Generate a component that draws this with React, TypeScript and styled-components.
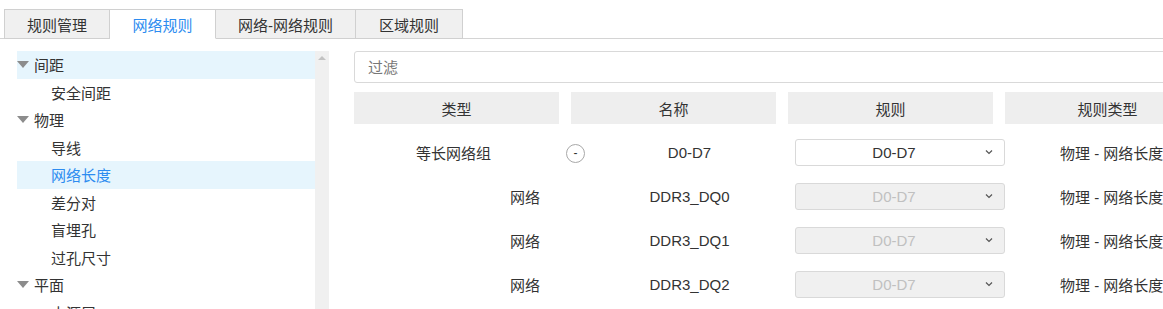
import React from "react"
import styled, { createGlobalStyle } from "styled-components"

const GlobalStyle = createGlobalStyle`
  html, body {
    margin: 0;
    padding: 0;
    background: #fff;
    overflow: hidden;
  }
  body {
    font-family: "Liberation Sans", "Noto Sans CJK SC", sans-serif;
    font-size: 15px;
    color: #333;
  }
`

const Page = styled.div`
  width: 1163px;
  height: 309px;
  overflow: hidden;
`

const TabBar = styled.div`
  display: flex;
  padding: 9px 0 0 4px;
  border-bottom: 1px solid #d4d4d4;
  height: 29px;
  box-sizing: content-box;
`

const Tab = styled.div<{ $active?: boolean; $w: number }>`
  width: ${p => p.$w}px;
  height: 29px;
  box-sizing: border-box;
  display: flex;
  align-items: center;
  justify-content: center;
  border: 1px solid #d0d0d0;
  border-left: ${p => (p.$active ? "none" : "1px solid #d0d0d0")};
  border-bottom: ${p => (p.$active ? "1px solid #fff" : "1px solid #d0d0d0")};
  margin-bottom: -1px;
  height: 30px;
  background: ${p => (p.$active ? "#fff" : "#f0f0f0")};
  color: ${p => (p.$active ? "#2d8cf0" : "#333")};
  & + & {
    border-left: none;
  }
`

const Body = styled.div`
  display: flex;
  padding: 12px 0 0 17px;
  gap: 25px;
`

const TreePanel = styled.div`
  display: flex;
  width: 312px;
  height: 260px;
  flex: none;
`

const TreeList = styled.div`
  width: 298px;
  overflow: hidden;
`

const TreeRow = styled.div<{ $level: number; $selected?: boolean }>`
  height: 27.5px;
  display: flex;
  align-items: center;
  padding-left: ${p => (p.$level === 0 ? 0 : 34)}px;
  background: ${p => (p.$selected ? "#e6f5fd" : "transparent")};
  color: ${p => (p.$selected && p.$level > 0 ? "#2d8cf0" : "#333")};
  white-space: nowrap;
`

const Caret = styled.span`
  width: 0;
  height: 0;
  border-left: 6.5px solid transparent;
  border-right: 6.5px solid transparent;
  border-top: 7px solid #8c8c8c;
  margin-right: 5px;
`

const ScrollTrack = styled.div`
  width: 14px;
  background: #f0f0f0;
  display: flex;
  justify-content: center;
  padding-top: 5px;
  box-sizing: border-box;
`

const ScrollArrow = styled.span`
  width: 0;
  height: 0;
  border-left: 4px solid transparent;
  border-right: 4px solid transparent;
  border-bottom: 4px solid #c2c2c2;
`

const Main = styled.div`
  width: 860px;
  flex: none;
`

const Filter = styled.input`
  display: block;
  width: 100%;
  height: 32px;
  box-sizing: border-box;
  border: 1px solid #d9d9d9;
  border-radius: 3px;
  padding: 0 13px;
  font: inherit;
  font-size: 15px;
  outline: none;
  &::placeholder {
    color: #777;
  }
`

const HeaderRow = styled.div`
  display: grid;
  grid-template-columns: repeat(4, 205px);
  gap: 12px;
  margin-top: 9px;
`

const HeaderCell = styled.div`
  height: 32px;
  background: #eeeeee;
  display: flex;
  align-items: center;
  justify-content: center;
`

const Rows = styled.div`
  margin-top: 6px;
`

const Row = styled.div`
  display: grid;
  grid-template-columns: 205px 26px 209px 211px 212px;
  height: 44px;
  align-items: center;
`

const TypeCell = styled.div<{ $group?: boolean }>`
  text-align: right;
  padding-right: ${p => (p.$group ? 68 : 19)}px;
`

const ToggleCell = styled.div`
  display: flex;
  justify-content: flex-end;
`

const ToggleButton = styled.span`
  width: 19px;
  height: 19px;
  box-sizing: border-box;
  border: 1px solid #a8a8a8;
  border-radius: 50%;
  display: flex;
  align-items: center;
  justify-content: center;
  font-size: 12px;
  line-height: 1;
  margin-top: 2px;
`

const NameCell = styled.div`
  text-align: center;
`

const SelectBox = styled.div<{ $disabled?: boolean }>`
  justify-self: end;
  width: 210px;
  height: 27px;
  box-sizing: border-box;
  border: 1px solid #d9d9d9;
  border-radius: 3px;
  background: ${p => (p.$disabled ? "#f0f0f0" : "#fff")};
  color: ${p => (p.$disabled ? "#c0c0c0" : "#333")};
  display: flex;
  align-items: center;
  padding: 0 10px 0 0;
`

const SelectValue = styled.span`
  flex: 1;
  text-align: center;
  padding-left: 8px;
`

const Chevron = styled.svg`
  width: 10px;
  height: 10px;
  flex: none;
`

const RuleType = styled.div`
  padding-left: 55px;
  white-space: nowrap;
`

const tabs = [
  { label: "规则管理", w: 106 },
  { label: "网络规则", w: 106, active: true },
  { label: "网络-网络规则", w: 140 },
  { label: "区域规则", w: 107 },
]

const tree = [
  { label: "间距", level: 0, selected: true },
  { label: "安全间距", level: 1 },
  { label: "物理", level: 0 },
  { label: "导线", level: 1 },
  { label: "网络长度", level: 1, selected: true },
  { label: "差分对", level: 1 },
  { label: "盲埋孔", level: 1 },
  { label: "过孔尺寸", level: 1 },
  { label: "平面", level: 0 },
  { label: "电源层", level: 1 },
]

const rows = [
  { type: "等长网络组", name: "D0-D7", group: true },
  { type: "网络", name: "DDR3_DQ0" },
  { type: "网络", name: "DDR3_DQ1" },
  { type: "网络", name: "DDR3_DQ2" },
]

export default function App() {
  return (
    <Page>
      <GlobalStyle />
      <TabBar>
        {tabs.map(t => (
          <Tab key={t.label} $active={t.active} $w={t.w}>
            {t.label}
          </Tab>
        ))}
      </TabBar>
      <Body>
        <TreePanel>
          <TreeList>
            {tree.map(n => (
              <TreeRow key={n.label} $level={n.level} $selected={n.selected}>
                {n.level === 0 && <Caret />}
                {n.label}
              </TreeRow>
            ))}
          </TreeList>
          <ScrollTrack>
            <ScrollArrow />
          </ScrollTrack>
        </TreePanel>
        <Main>
          <Filter placeholder="过滤" />
          <HeaderRow>
            <HeaderCell>类型</HeaderCell>
            <HeaderCell>名称</HeaderCell>
            <HeaderCell>规则</HeaderCell>
            <HeaderCell>规则类型</HeaderCell>
          </HeaderRow>
          <Rows>
            {rows.map(r => (
              <Row key={r.name}>
                <TypeCell $group={r.group}>{r.type}</TypeCell>
                <ToggleCell>{r.group && <ToggleButton>-</ToggleButton>}</ToggleCell>
                <NameCell>{r.name}</NameCell>
                <SelectBox $disabled={!r.group}>
                  <SelectValue>D0-D7</SelectValue>
                  <Chevron viewBox="0 0 10 10">
                    <path d="M2 3.5 L5 6.5 L8 3.5" fill="none" stroke="#555" strokeWidth="1.2" />
                  </Chevron>
                </SelectBox>
                <RuleType>物理 - 网络长度</RuleType>
              </Row>
            ))}
          </Rows>
        </Main>
      </Body>
    </Page>
  )
}
